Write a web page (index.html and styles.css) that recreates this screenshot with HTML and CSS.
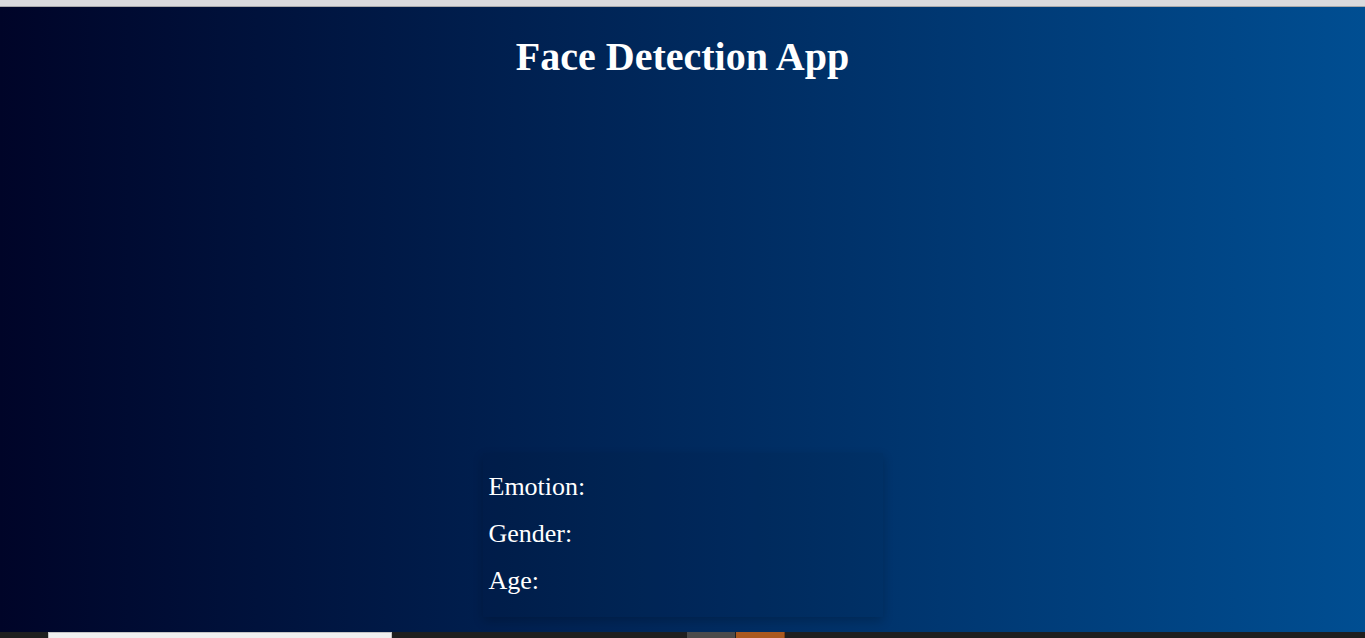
FILE: index.html
```html
<!DOCTYPE html>
<html lang="en">
<head>
<meta charset="utf-8">
<title>Face Detection App</title>
<link rel="stylesheet" href="styles.css">
</head>
<body>
  <div class="chrome"></div>
  <main class="viewport">
    <h1 class="title">Face Detection App</h1>
    <div class="video-area"></div>
    <section class="results">
      <p class="result">Emotion:</p>
      <p class="result">Gender:</p>
      <p class="result">Age:</p>
    </section>
  </main>
  <div class="taskbar">
    <div class="tb-search"></div>
    <div class="tb-gap"></div>
    <div class="tb-app tb-grey"></div>
    <div class="tb-app tb-orange"></div>
  </div>
</body>
</html>
```
FILE: styles.css
```css
html, body {
  margin: 0;
  padding: 0;
  width: 1365px;
  height: 638px;
  overflow: hidden;
  font-family: "Liberation Serif", "Times New Roman", serif;
}

.chrome {
  height: 6px;
  background: #dadadd;
  border-bottom: 1px solid #a9a9ab;
}

.viewport {
  display: flow-root;
  height: 625px;
  background: linear-gradient(to right, #000428, #004e92);
  color: #ffffff;
  overflow: hidden;
}

.title {
  margin: 27px 0;
  font-size: 40px;
  line-height: 46px;
  font-weight: bold;
  text-align: center;
}

.video-area {
  height: 346px;
}

.results {
  width: 400px;
  margin: 0 auto;
  box-sizing: border-box;
  height: 164px;
  padding: 19px 6px 25px;
  display: flex;
  flex-direction: column;
  gap: 17px;
  background: rgba(0, 0, 0, 0.05);
  box-shadow: 0 4px 10px rgba(0, 0, 0, 0.2);
}

.result {
  margin: 0;
  font-size: 26px;
  line-height: 30px;
}

.taskbar {
  height: 6px;
  background: #1f1f1f;
  display: flex;
}

.tb-search {
  margin-left: 48px;
  width: 342px;
  height: 6px;
  background: #f0f0f0;
  border: 1px solid #c4c4c4;
  border-bottom: none;
}

.tb-gap {
  width: 295px;
}

.tb-app {
  width: 48px;
  height: 6px;
}

.tb-grey {
  background: #4b4b4b;
  margin-right: 1px;
}

.tb-orange {
  background: #a9591f;
  border-right: 1px solid #7a3e14;
}
```
